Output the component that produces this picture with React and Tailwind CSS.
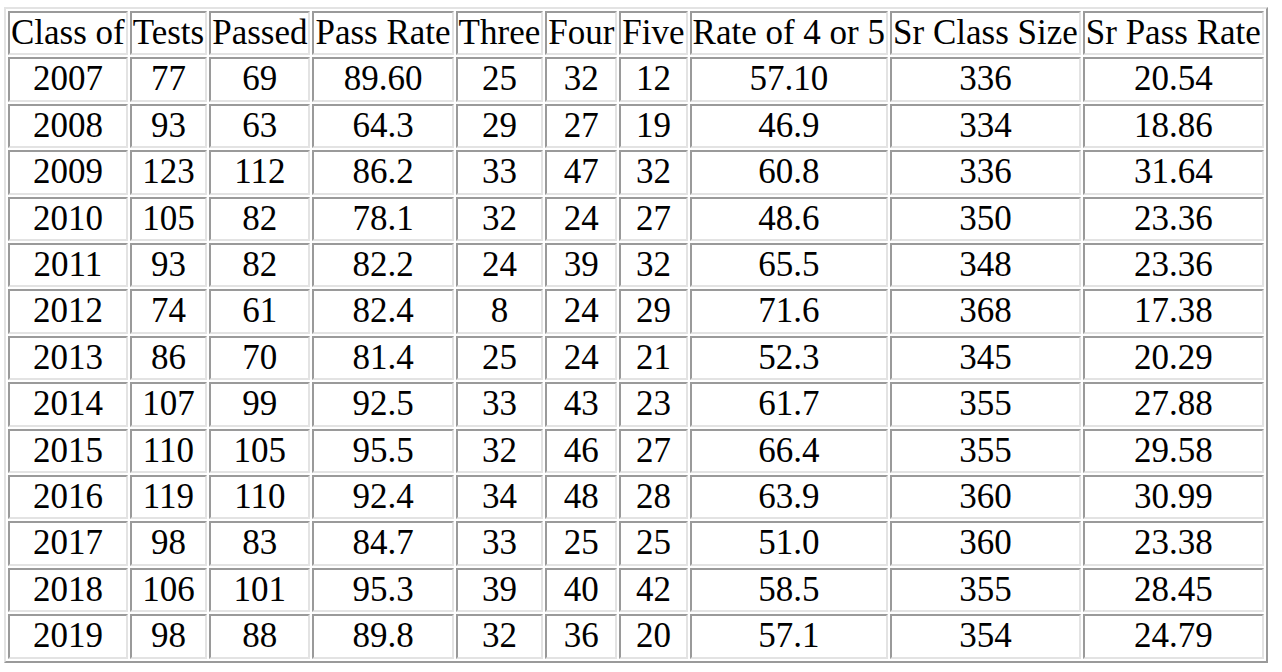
import React from 'react';

const headers = ['Class of', 'Tests', 'Passed', 'Pass Rate', 'Three', 'Four', 'Five', 'Rate of 4 or 5', 'Sr Class Size', 'Sr Pass Rate'];

const rows = [
  ['2007', '77', '69', '89.60', '25', '32', '12', '57.10', '336', '20.54'],
  ['2008', '93', '63', '64.3', '29', '27', '19', '46.9', '334', '18.86'],
  ['2009', '123', '112', '86.2', '33', '47', '32', '60.8', '336', '31.64'],
  ['2010', '105', '82', '78.1', '32', '24', '27', '48.6', '350', '23.36'],
  ['2011', '93', '82', '82.2', '24', '39', '32', '65.5', '348', '23.36'],
  ['2012', '74', '61', '82.4', '8', '24', '29', '71.6', '368', '17.38'],
  ['2013', '86', '70', '81.4', '25', '24', '21', '52.3', '345', '20.29'],
  ['2014', '107', '99', '92.5', '33', '43', '23', '61.7', '355', '27.88'],
  ['2015', '110', '105', '95.5', '32', '46', '27', '66.4', '355', '29.58'],
  ['2016', '119', '110', '92.4', '34', '48', '28', '63.9', '360', '30.99'],
  ['2017', '98', '83', '84.7', '33', '25', '25', '51.0', '360', '23.38'],
  ['2018', '106', '101', '95.3', '39', '40', '42', '58.5', '355', '28.45'],
  ['2019', '98', '88', '89.8', '32', '36', '20', '57.1', '354', '24.79'],
];

const cellClass = "border-2 border-t-[#9a9a9a] border-l-[#9a9a9a] border-b-[#e3e3e3] border-r-[#e3e3e3] px-[1px] py-[1px] text-center font-normal";

export default function App() {
  return (
    <div className="bg-white min-h-[672px] pt-[7px] pl-[4px] text-black" style={{ fontFamily: '"Liberation Serif", "Times New Roman", serif' }}>
      <table className="border-separate border-spacing-[2px] border-2 border-t-[#e3e3e3] border-l-[#e3e3e3] border-b-[#9a9a9a] border-r-[#9a9a9a] text-[35px] leading-[38.4px]">
        <tbody>
          <tr>
            {headers.map(h => (
              <td key={h} className={cellClass}>{h}</td>
            ))}
          </tr>
          {rows.map(row => (
            <tr key={row[0]}>
              {row.map((val, i) => (
                <td key={i} className={cellClass}>{val}</td>
              ))}
            </tr>
          ))}
        </tbody>
      </table>
    </div>
  );
}
